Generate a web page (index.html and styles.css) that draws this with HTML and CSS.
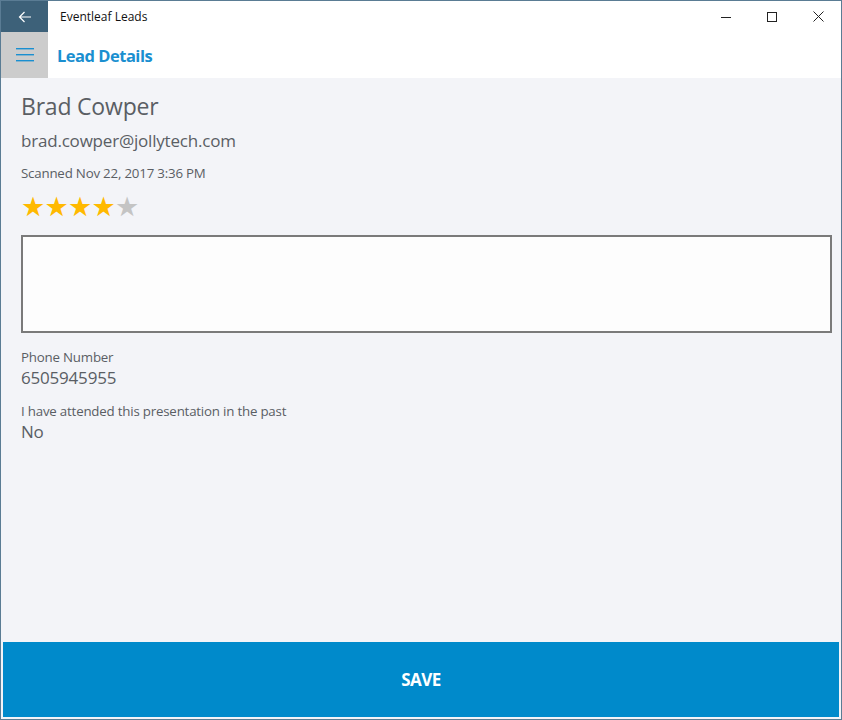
FILE: index.html
```html
<html>
  <head>
    <title>Eventleaf Leads</title>
    <link rel="stylesheet" href="styles.css">
  </head>
  <body>
  <div id="window">
    <div id="titleBar">
      <a class="btn-back" href="#" title="Back">
        <svg width="14" height="12" viewBox="0 0 14 12"><path d="M13 6H1.5M6.5 1L1.5 6l5 5" fill="none" stroke="#fff" stroke-width="1.2"/></svg>
      </a>
      <span class="app-title">Eventleaf Leads</span>
      <div class="window-controls">
        <span class="ctl"><svg width="10" height="10" viewBox="0 0 10 10"><path d="M0 5.5h10" stroke="#222" stroke-width="1"/></svg></span>
        <span class="ctl"><svg width="10" height="10" viewBox="0 0 10 10"><rect x="0.5" y="0.5" width="9" height="9" fill="none" stroke="#222" stroke-width="1"/></svg></span>
        <span class="ctl"><svg width="11" height="11" viewBox="0 0 11 11"><path d="M0.5 0.5l10 10M10.5 0.5l-10 10" stroke="#222" stroke-width="1"/></svg></span>
      </div>
    </div>
    <div id="header">
      <a class="btn-menu" href="#" title="Menu">
        <svg width="18" height="14" viewBox="0 0 18 14"><rect x="0" y="0" width="18" height="1.4" fill="#1a8fd0"/><rect x="0" y="6" width="18" height="1.4" fill="#1a8fd0"/><rect x="0" y="12" width="18" height="1.4" fill="#1a8fd0"/></svg>
      </a>
      <h1>Lead Details</h1>
    </div>
    <div id="mainContent">
      <div class="lead-name">Brad Cowper</div>
      <div class="lead-email">brad.cowper@jollytech.com</div>
      <div class="lead-scanned">Scanned Nov 22, 2017 3:36 PM</div>
      <div class="rating">
        <span class="star on">&#9733;</span><span class="star on">&#9733;</span><span class="star on">&#9733;</span><span class="star on">&#9733;</span><span class="star">&#9733;</span>
      </div>
      <textarea class="notes"></textarea>
      <div class="field-label">Phone Number</div>
      <div class="field-value">6505945955</div>
      <div class="field-label">I have attended this presentation in the past</div>
      <div class="field-value">No</div>
    </div>
    <div id="footer">
      <a class="btn-save" href="#">SAVE</a>
    </div>
  </div>
  </body>
</html>
```

FILE: styles.css
```css
body { margin: 0px; font-family: "Open Sans", "Noto Sans", sans-serif; background: #fff; }
h1 { margin: 0px; }

#window { width: 840px; height: 718px; border: 1px solid #5a7c94; display: flex; flex-direction: column; background: #f3f4f8; }

#titleBar { height: 31px; display: flex; align-items: center; background: #fff; }
#titleBar .btn-back { width: 47px; height: 31px; background: #3d6179; display: flex; align-items: center; justify-content: center; }
#titleBar .app-title { font-size: 12px; color: #111; margin-left: 12px; flex: 1; }
.window-controls { display: flex; height: 31px; }
.window-controls .ctl { width: 46px; display: flex; align-items: center; justify-content: center; }

#header { height: 46px; display: flex; align-items: center; background: #fff; }
#header .btn-menu { width: 47px; height: 46px; background: #cccccc; display: flex; align-items: center; justify-content: center; }
#header h1 { font-size: 16.5px; font-weight: bold; color: #1a8fd0; margin-left: 9px; letter-spacing: -0.5px; }

#mainContent { flex: 1; padding: 12px 9px 0px 20px; color: #5a5e64; }
.lead-name { font-size: 23px; line-height: 32px; letter-spacing: -0.2px; }
.lead-email { font-size: 17px; line-height: 24px; margin-top: 7px; letter-spacing: -0.2px; }
.lead-scanned { font-size: 13.3px; line-height: 18px; margin-top: 11px; letter-spacing: -0.2px; }
.rating { display: flex; margin-top: 10px; height: 30px; align-items: center; }
.star { font-family: "DejaVu Sans", sans-serif; font-size: 27px; line-height: 26px; width: 23.5px; color: #c4c4c4; }
.star.on { color: #ffb900; }
.notes { display: block; width: 811px; height: 98px; box-sizing: border-box; margin-top: 13px; border: 2px solid #7a7a7a; background: #fdfdfd; resize: none; }
.field-label { font-size: 13.3px; line-height: 18px; margin-top: 15px; letter-spacing: -0.2px; }
.field-label + .field-value + .field-label { margin-top: 12px; }
.field-value { font-size: 17px; line-height: 24px; letter-spacing: -0.2px; }

#footer { padding: 0px 2px 2px 2px; }
.btn-save { display: flex; height: 75px; align-items: center; justify-content: center; background: #008acb; color: #fff; font-size: 17px; font-weight: bold; text-decoration: none; letter-spacing: -0.5px; }
```
